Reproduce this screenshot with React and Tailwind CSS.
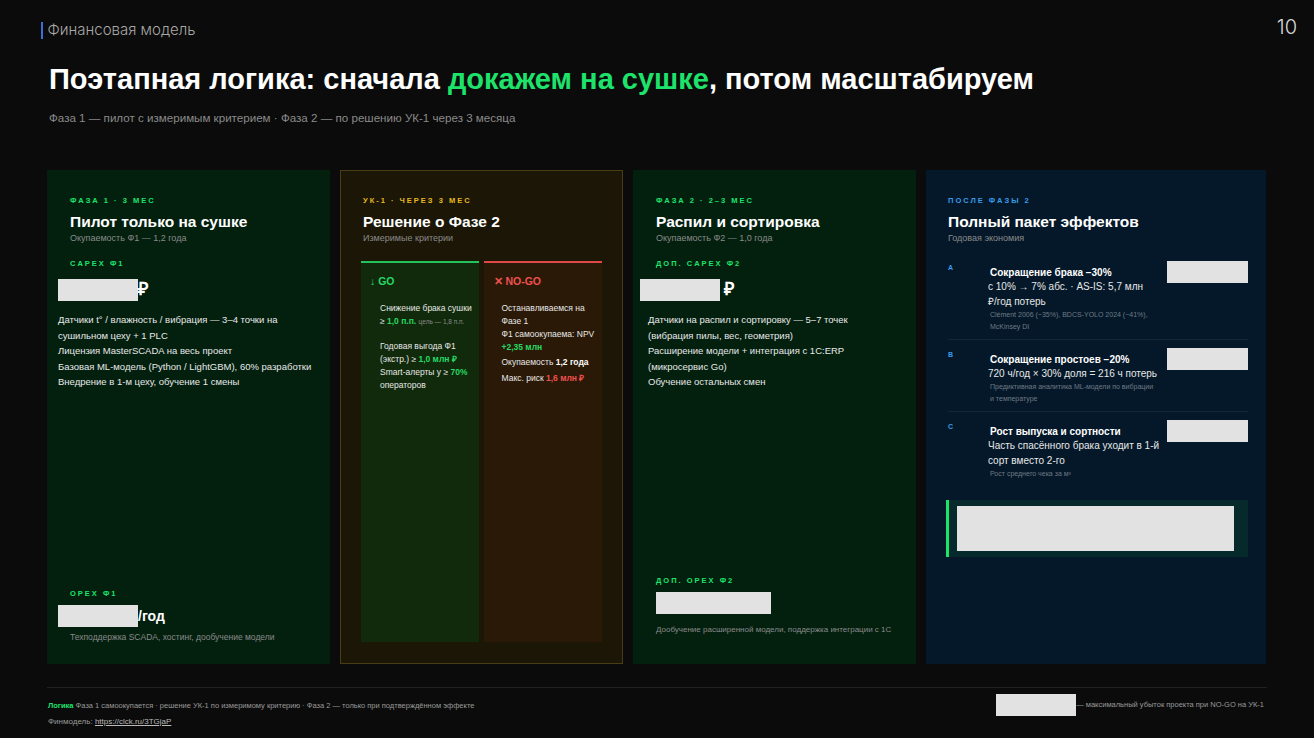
const F = { fontFamily: '"Liberation Sans", Arial, sans-serif' };
const Red = ({ w, h, cls = "" }) => <span className={`inline-block shrink-0 bg-[#e2e2e2] ${cls}`} style={{ width: w, height: h }} />;

export default function App() {
  return (
    <div style={F} className="w-[1314px] h-[738px] bg-[#0b0b0b] text-white relative overflow-hidden">
      <div className="absolute left-[41px] top-[19px] flex items-center">
        <div className="w-[1.5px] h-[17px] bg-[#3b6fd8]" />
        <span className="ml-[5px] text-[15px] text-[#a8a8a8]" style={{ fontFamily: 'Inter, sans-serif', fontWeight: 300 }}>Финансовая модель</span>
      </div>
      <div className="absolute right-[17px] top-[12px] text-[20px] text-[#d8d8d8]" style={{ fontFamily: 'Inter, sans-serif', fontWeight: 300 }}>10</div>
      <div className="pt-[61px] pl-[49px]">
        <h1 className="text-[29px] font-bold leading-[36px]">Поэтапная логика: сначала <span className="text-[#1ee36b]">докажем на сушке</span>, потом масштабируем</h1>
        <p className="mt-[12px] text-[11.6px] text-[#8a8a8a]">Фаза 1 — пилот с измеримым критерием · Фаза 2 — по решению УК-1 через 3 месяца</p>
      </div>
      <div className="absolute left-[47px] top-[170px] flex gap-[10px] h-[494px]">
        {/* Card 1 */}
        <div className="w-[283px] bg-[#03200f] pl-[23px] pr-[14px] pt-[25px] pb-[20px] flex flex-col">
          <div className="text-[7.5px] font-bold tracking-[2px] text-[#1ee36b]">ФАЗА 1 · 3 МЕС</div>
          <div className="mt-[6px] text-[15.5px] font-bold leading-[20px]">Пилот только на сушке</div>
          <div className="text-[9px] text-[#8a8a8a]">Окупаемость Ф1 — 1,2 года</div>
          <div className="mt-[12px] text-[7.5px] font-bold tracking-[2px] text-[#1ee36b]">CAPEX Ф1</div>
          <div className="mt-[7px] -ml-[12px] flex items-center text-[18px] font-bold"><Red w={80} h={22} />₽</div>
          <div className="mt-[9px] -ml-[12px] text-[9.5px] leading-[15.5px] text-[#e8e8e8]">
            <div>Датчики t° / влажность / вибрация — 3–4 точки на сушильном цеху + 1 PLC</div>
            <div>Лицензия MasterSCADA на весь проект</div>
            <div>Базовая ML-модель (Python / LightGBM), 60% разработки</div>
            <div>Внедрение в 1-м цеху, обучение 1 смены</div>
          </div>
          <div className="mt-auto text-[7.5px] font-bold tracking-[2px] text-[#1ee36b]">OPEX Ф1</div>
          <div className="mt-[6px] -ml-[12px] flex items-center text-[14px] font-bold"><Red w={80} h={22} />/год</div>
          <div className="mt-[4px] text-[8.5px] text-[#8a8a8a]">Техподдержка SCADA, хостинг, дообучение модели</div>
        </div>
        {/* Card 2 */}
        <div className="w-[283px] bg-[#1b1606] border border-[#4a3c14] pt-[24px] px-[20px] pb-[21px] flex flex-col">
          <div className="ml-[2px] text-[7.5px] font-bold tracking-[2px] text-[#e8b820]">УК-1 · ЧЕРЕЗ 3 МЕС</div>
          <div className="ml-[2px] mt-[6px] text-[15.5px] font-bold leading-[20px]">Решение о Фазе 2</div>
          <div className="ml-[2px] text-[9px] text-[#8a8a8a]">Измеримые критерии</div>
          <div className="mt-[15px] flex gap-[5px] flex-1">
            <div className="flex-1 bg-[#102a0b] border-t-2 border-[#22c35a] pl-[9px] pr-[4px] pt-[11px]">
              <div className="text-[10.5px] font-bold text-[#27d865]">↓ GO</div>
              <div className="mt-[12px] pl-[10px] text-[8.5px] leading-[13px] text-[#e8e8e8]">
                <div>Снижение брака сушки</div>
                <div>≥ <b className="text-[#27d865]">1,0 п.п.</b> <span className="text-[6.5px] text-[#8a8a8a]">цель — 1,8 п.п.</span></div>
                <div className="mt-[12px]">Годовая выгода Ф1</div>
                <div>(экстр.) ≥ <b className="text-[#27d865]">1,0 млн ₽</b></div>
                <div>Smart-алерты у ≥ <b className="text-[#27d865]">70%</b></div>
                <div>операторов</div>
              </div>
            </div>
            <div className="flex-1 bg-[#2a1906] border-t-2 border-[#e04848] pl-[10px] pr-[4px] pt-[11px]">
              <div className="text-[10.5px] font-bold text-[#f05050]">✕ NO-GO</div>
              <div className="mt-[12px] pl-[8px] text-[8.5px] leading-[13px] text-[#e8e8e8]">
                <div>Останавливаемся на</div>
                <div>Фазе 1</div>
                <div>Ф1 самоокупаема: NPV</div>
                <div><b className="text-[#27d865]">+2,35 млн</b></div>
                <div className="mt-[2px]">Окупаемость <b className="text-white">1,2 года</b></div>
                <div className="mt-[3px]">Макс. риск <b className="text-[#f05050]">1,6 млн ₽</b></div>
              </div>
            </div>
          </div>
        </div>
        {/* Card 3 */}
        <div className="w-[283px] bg-[#03200f] pl-[23px] pr-[10px] pt-[25px] pb-[28px] flex flex-col">
          <div className="text-[7.5px] font-bold tracking-[2px] text-[#1ee36b]">ФАЗА 2 · 2–3 МЕС</div>
          <div className="mt-[6px] text-[15.5px] font-bold leading-[20px]">Распил и сортировка</div>
          <div className="text-[9px] text-[#8a8a8a]">Окупаемость Ф2 — 1,0 года</div>
          <div className="mt-[12px] text-[7.5px] font-bold tracking-[2px] text-[#1ee36b]">ДОП. CAPEX Ф2</div>
          <div className="mt-[7px] -ml-[16px] flex items-center gap-[4px] text-[18px] font-bold"><Red w={80} h={22} />₽</div>
          <div className="mt-[9px] -ml-[8px] text-[9.5px] leading-[15.5px] text-[#e8e8e8]">
            <div>Датчики на распил и сортировку — 5–7 точек</div>
            <div>(вибрация пилы, вес, геометрия)</div>
            <div>Расширение модели + интеграция с 1С:ERP</div>
            <div>(микросервис Go)</div>
            <div>Обучение остальных смен</div>
          </div>
          <div className="mt-auto text-[7.5px] font-bold tracking-[2px] text-[#1ee36b]">ДОП. OPEX Ф2</div>
          <div className="mt-[6px]"><Red w={115} h={22} /></div>
          <div className="mt-[3px] text-[8px] whitespace-nowrap text-[#8a8a8a]">Дообучение расширенной модели, поддержка интеграции с 1С</div>
        </div>
        {/* Card 4 */}
        <div className="w-[340px] bg-[#041829] pl-[22px] pr-[18px] pt-[25px] flex flex-col">
          <div className="text-[7.5px] font-bold tracking-[2px] text-[#3a9be8]">ПОСЛЕ ФАЗЫ 2</div>
          <div className="mt-[6px] text-[15.5px] font-bold leading-[20px]">Полный пакет эффектов</div>
          <div className="text-[9px] text-[#8a8a8a]">Годовая экономия</div>
          {[
            { l: "A", t: "Сокращение брака −30%", d: ["с 10% → 7% абс. · AS-IS: 5,7 млн", "₽/год потерь"], n: ["Clément 2006 (−35%), BDCS-YOLO 2024 (−41%),", "McKinsey DI"] },
            { l: "B", t: "Сокращение простоев −20%", d: ["720 ч/год × 30% доля = 216 ч потерь"], n: ["Предиктивная аналитика ML-модели по вибрации", "и температуре"] },
            { l: "C", t: "Рост выпуска и сортности", d: ["Часть спасённого брака уходит в 1-й", "сорт вместо 2-го"], n: ["Рост среднего чека за м³"] },
          ].map((r, i) => (
            <div key={r.l} className={`flex ${i === 0 ? "pt-[3px]" : "pt-[8px]"} pb-[6px] ${i < 2 ? "border-b border-[#10283c]" : ""} ${i === 0 ? "mt-[12px]" : ""}`}>
              <div className="w-[40px] text-[7px] font-bold text-[#3a9be8] pt-[2px]">{r.l}</div>
              <div className="flex-1 pt-[6px]">
                <div className="text-[10px] font-bold ml-[2px] leading-[12px]">{r.t}</div>
                <div className="text-[10px] leading-[15px] text-[#e8e8e8]">{r.d.map(x => <div key={x}>{x}</div>)}</div>
                <div className="text-[7px] leading-[12px] text-[#6f7a85] ml-[2px]">{r.n.map(x => <div key={x}>{x}</div>)}</div>
              </div>
              <Red w={81} h={22} />
            </div>
          ))}
          <div className="mt-[14px] -ml-[2px] h-[57px] bg-[#062a2c] border-l-[3px] border-[#1ee36b] py-[6px] pl-[8px] pr-[14px]">
            <div className="w-full h-full bg-[#e2e2e2]" />
          </div>
        </div>
      </div>
      <div className="absolute left-[47px] right-[47px] top-[687px] border-t border-[#222]" />
      <div className="absolute left-[48px] top-[700px] text-[7.5px] text-[#9a9a9a]"><b className="text-[#1ee36b]">Логика</b> Фаза 1 самоокупается · решение УК-1 по измеримому критерию · Фаза 2 — только при подтверждённом эффекте</div>
      <div className="absolute left-[48px] top-[716px] text-[8px] text-[#9a9a9a]">Финмодель: <span className="underline text-[#bbb]">https://clck.ru/3TGjaP</span></div>
      <div className="absolute right-[50px] top-[694px] flex items-center text-[7.5px] text-[#9a9a9a]"><Red w={80} h={22} />— максимальный убыток проекта при NO-GO на УК-1</div>
    </div>
  );
}
